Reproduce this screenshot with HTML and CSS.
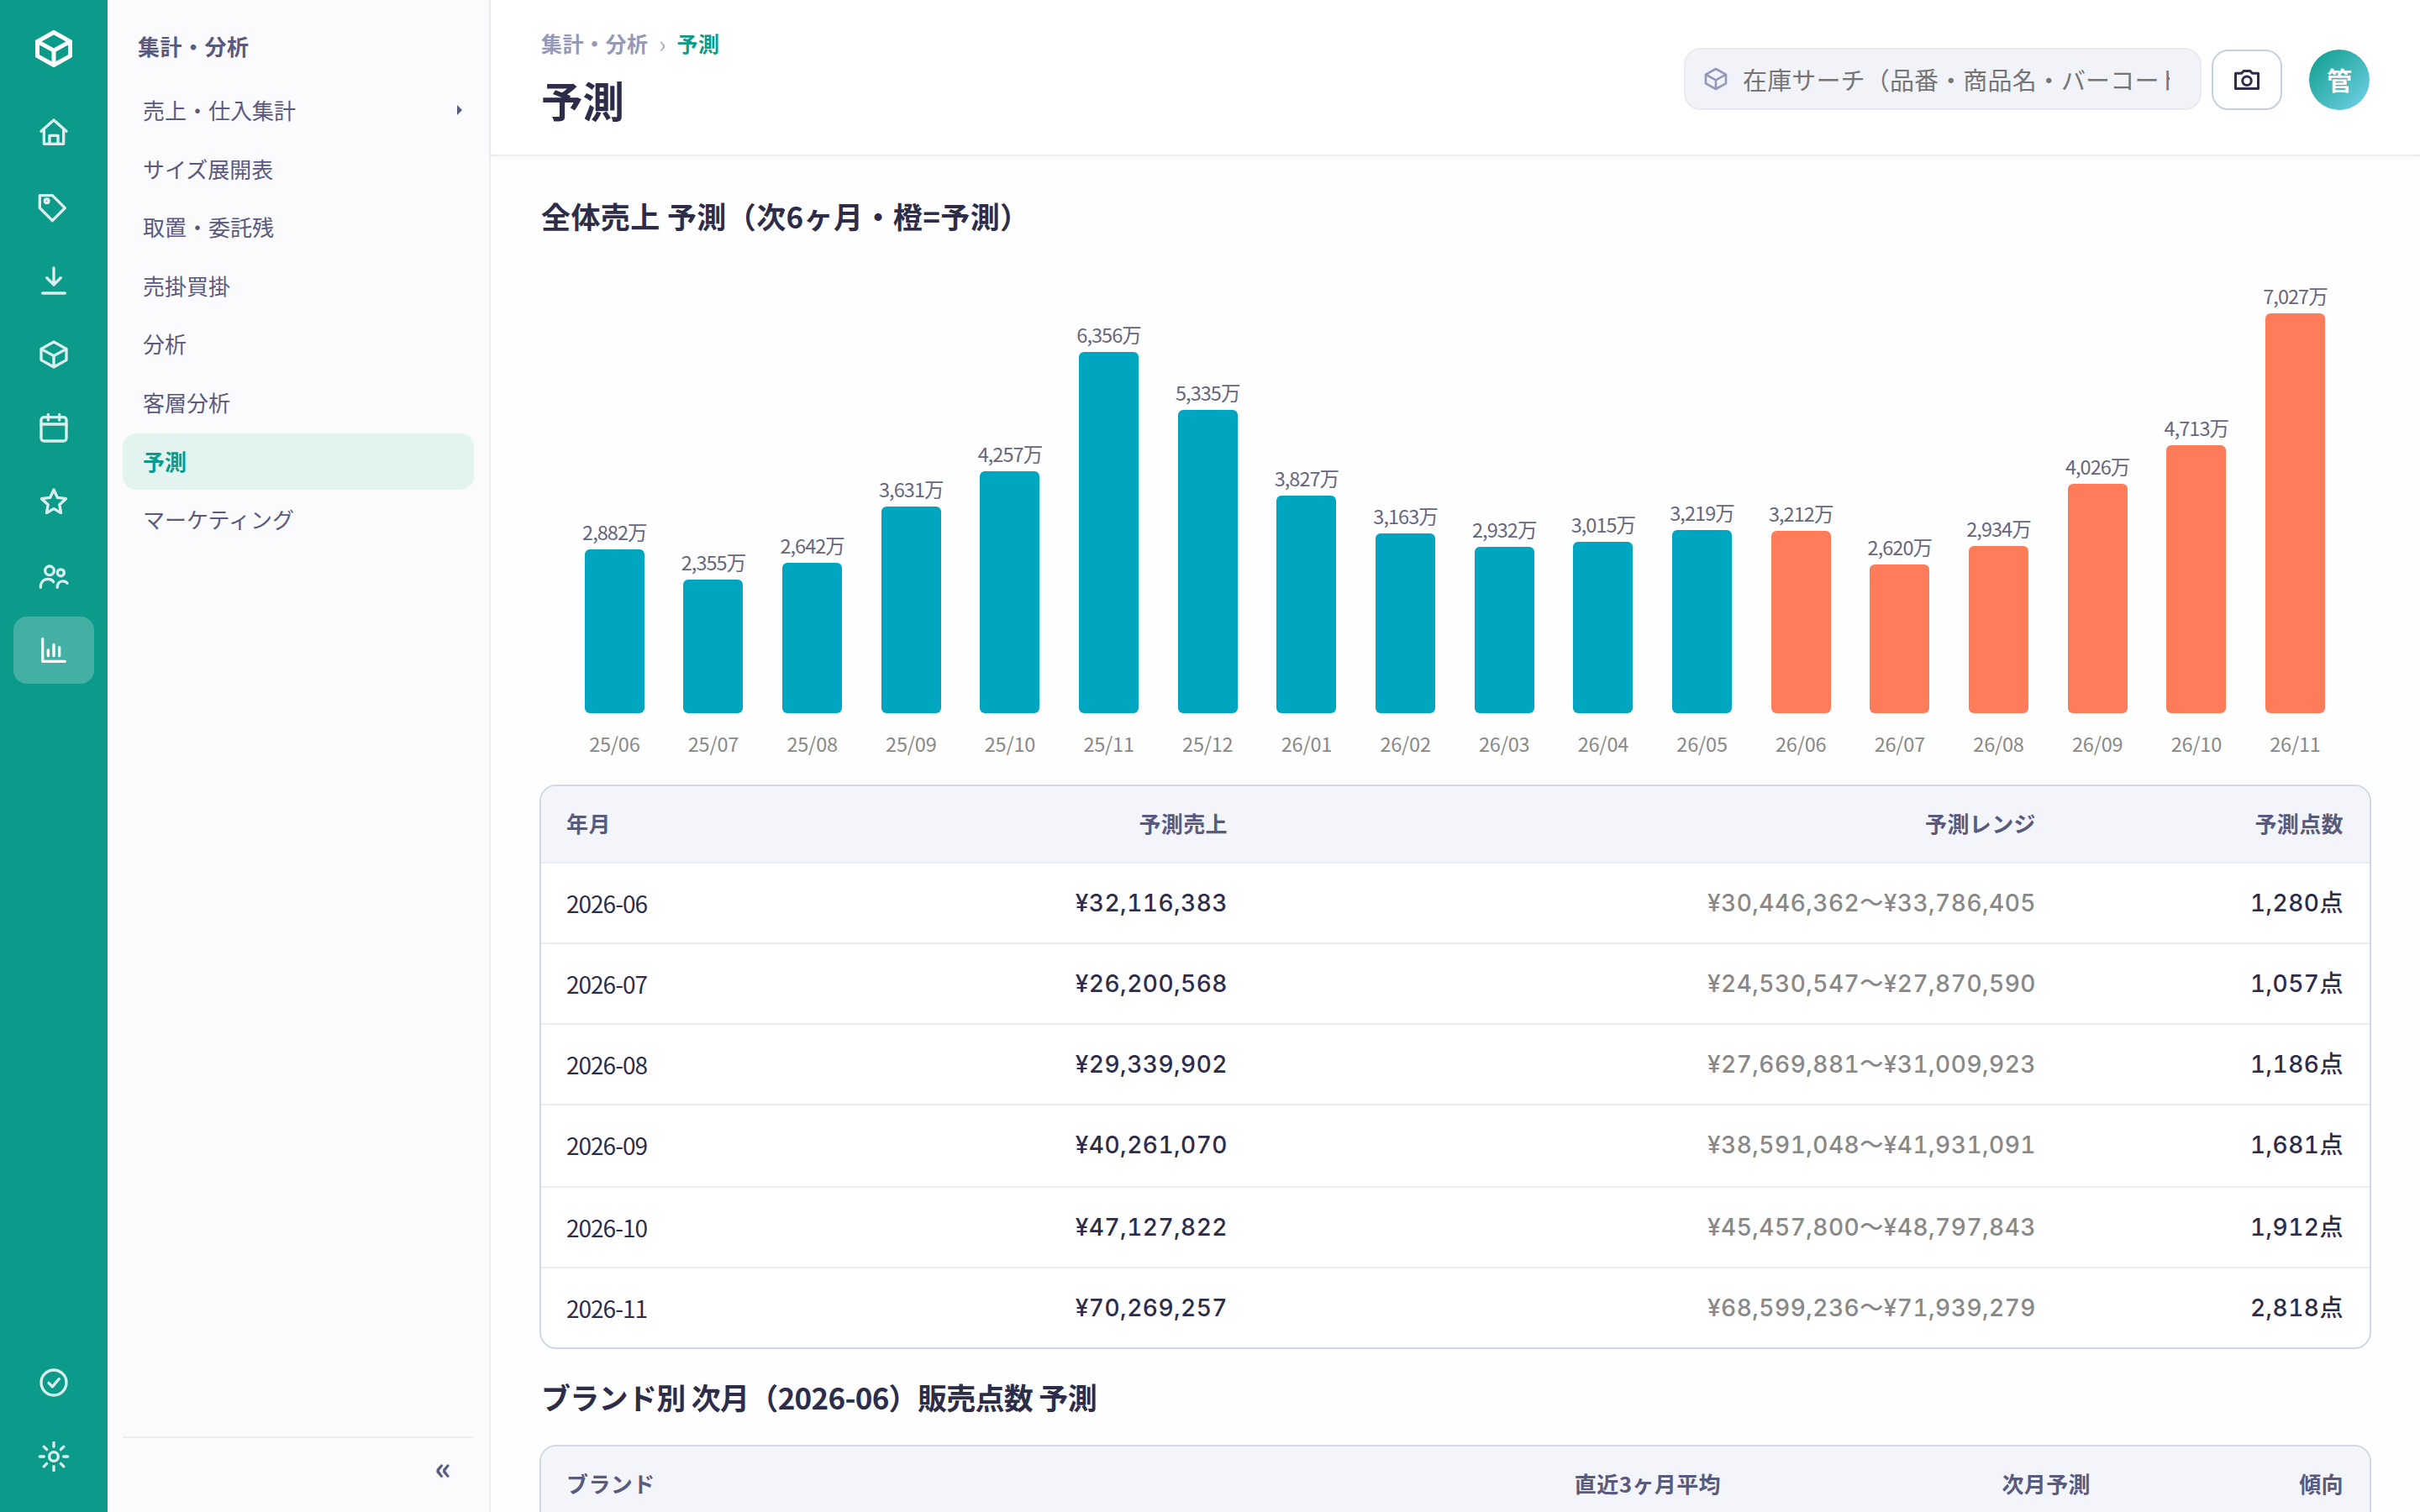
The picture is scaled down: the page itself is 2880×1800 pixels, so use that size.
FILE: index.html
```
<!DOCTYPE html>
<html lang="ja">
<head>
<meta charset="utf-8">
<title>予測</title>
<link rel="stylesheet" href="styles.css">
</head>
<body>
<div class="app">
  <nav class="rail">
    <svg class="logo" viewBox="0 0 24 24"><path d="M12 3l9 5v8l-9 5-9-5V8zM3 8l9 5 9-5M12 13v8"/></svg>
    <a class="rail-item"><svg viewBox="0 0 24 24"><path d="M3 11l9-8 9 8M5 10v10h14V10M9 20v-6h6v6"/></svg></a>
    <a class="rail-item"><svg viewBox="0 0 24 24"><path d="M2 4h9l9 9-9 9-9-9z"/><circle cx="7" cy="8" r="1.4"/></svg></a>
    <a class="rail-item"><svg viewBox="0 0 24 24"><path d="M12 3v12M7 10l5 5 5-5M4 21h16"/></svg></a>
    <a class="rail-item"><svg viewBox="0 0 24 24"><path d="M12 3l9 5v8l-9 5-9-5V8zM3 8l9 5 9-5M12 13v8"/></svg></a>
    <a class="rail-item"><svg viewBox="0 0 24 24"><rect x="3" y="4" width="18" height="17" rx="2"/><path d="M3 9h18M8 2v4M16 2v4"/></svg></a>
    <a class="rail-item"><svg viewBox="0 0 24 24"><path d="M12 3l2.6 5.6 6.1.8-4.6 4.3 1 5.8-5.1-2.9-5.1 2.9 1-5.8-4.6-4.3 6.1-.8z"/></svg></a>
    <a class="rail-item"><svg viewBox="0 0 24 24"><circle cx="9" cy="8" r="3.2"/><circle cx="17" cy="9.5" r="2.4"/><path d="M2.6 20c0-3.6 2.1-6 5.4-6 1.7 0 3 .7 3.8 2M14.5 20c0-2.8 1.6-4.5 4-4.5 1.3 0 2.4.5 3.1 1.5"/></svg></a>
    <a class="rail-item active"><svg viewBox="0 0 24 24"><path d="M4 4v16h16M8 12v4M12 8v8M16 10v6"/></svg></a>
    <span class="grow"></span>
    <a class="rail-item"><svg viewBox="0 0 24 24"><circle cx="12" cy="12" r="9"/><path d="M8.4 12.2l2.6 2.7 4.8-5.6"/></svg></a>
    <a class="rail-item"><svg viewBox="0 0 24 24"><circle cx="12" cy="12" r="3.2"/><path d="M12 2v3M12 19v3M2 12h3M19 12h3M4.9 4.9L7 7M17 17l2.1 2.1M4.9 19.1L7 17M17 7l2.1-2.1"/></svg></a>
  </nav>

  <aside class="panel">
    <h2 class="panel-title">集計・分析</h2>
    <a class="menu-item">売上・仕入集計<svg class="caret" viewBox="0 0 6 12"><path d="M0 0l6 6-6 6z"/></svg></a>
    <a class="menu-item">サイズ展開表</a>
    <a class="menu-item">取置・委託残</a>
    <a class="menu-item">売掛買掛</a>
    <a class="menu-item">分析</a>
    <a class="menu-item">客層分析</a>
    <a class="menu-item current">予測</a>
    <a class="menu-item">マーケティング</a>
    <span class="grow"></span>
    <div class="panel-foot">«</div>
  </aside>

  <main class="main">
    <header class="topbar">
      <div class="heading">
        <div class="crumbs"><span>集計・分析</span><span class="sep">›</span><span class="here">予測</span></div>
        <h1>予測</h1>
      </div>
      <div class="tools">
        <div class="search">
          <svg viewBox="0 0 24 24"><path d="M12 3l9 5v8l-9 5-9-5V8zM3 8l9 5 9-5M12 13v8"/></svg>
          <span class="placeholder">在庫サーチ（品番・商品名・バーコード</span>
        </div>
        <div class="camera"><svg viewBox="0 0 24 24"><path d="M3 6.9h4.6l2-1.95h4.8l2 1.95H21v12.15H3z"/><circle cx="12" cy="12.9" r="3.5"/></svg></div>
        <div class="avatar">管</div>
      </div>
    </header>

    <section class="content">
      <h3 class="first">全体売上 予測（次6ヶ月・橙=予測）</h3>
      <div class="chart">
        <div class="col"><span class="val">2,882万</span><i class="bar" style="height:195.3px"></i><span class="tick">25/06</span></div>
        <div class="col"><span class="val">2,355万</span><i class="bar" style="height:159.4px"></i><span class="tick">25/07</span></div>
        <div class="col"><span class="val">2,642万</span><i class="bar" style="height:179px"></i><span class="tick">25/08</span></div>
        <div class="col"><span class="val">3,631万</span><i class="bar" style="height:245.9px"></i><span class="tick">25/09</span></div>
        <div class="col"><span class="val">4,257万</span><i class="bar" style="height:288.2px"></i><span class="tick">25/10</span></div>
        <div class="col"><span class="val">6,356万</span><i class="bar" style="height:430.3px"></i><span class="tick">25/11</span></div>
        <div class="col"><span class="val">5,335万</span><i class="bar" style="height:361.2px"></i><span class="tick">25/12</span></div>
        <div class="col"><span class="val">3,827万</span><i class="bar" style="height:259.1px"></i><span class="tick">26/01</span></div>
        <div class="col"><span class="val">3,163万</span><i class="bar" style="height:214.2px"></i><span class="tick">26/02</span></div>
        <div class="col"><span class="val">2,932万</span><i class="bar" style="height:198.5px"></i><span class="tick">26/03</span></div>
        <div class="col"><span class="val">3,015万</span><i class="bar" style="height:204.2px"></i><span class="tick">26/04</span></div>
        <div class="col"><span class="val">3,219万</span><i class="bar" style="height:218px"></i><span class="tick">26/05</span></div>
        <div class="col forecast"><span class="val">3,212万</span><i class="bar" style="height:217.5px"></i><span class="tick">26/06</span></div>
        <div class="col forecast"><span class="val">2,620万</span><i class="bar" style="height:177.4px"></i><span class="tick">26/07</span></div>
        <div class="col forecast"><span class="val">2,934万</span><i class="bar" style="height:198.6px"></i><span class="tick">26/08</span></div>
        <div class="col forecast"><span class="val">4,026万</span><i class="bar" style="height:272.6px"></i><span class="tick">26/09</span></div>
        <div class="col forecast"><span class="val">4,713万</span><i class="bar" style="height:319.1px"></i><span class="tick">26/10</span></div>
        <div class="col forecast"><span class="val">7,027万</span><i class="bar" style="height:475.7px"></i><span class="tick">26/11</span></div>
      </div>

      <div class="table monthly">
        <div class="row head"><span>年月</span><span>予測売上</span><span>予測レンジ</span><span>予測点数</span></div>
        <div class="row"><span>2026-06</span><span>¥32,116,383</span><span class="range">¥30,446,362〜¥33,786,405</span><span>1,280点</span></div>
        <div class="row"><span>2026-07</span><span>¥26,200,568</span><span class="range">¥24,530,547〜¥27,870,590</span><span>1,057点</span></div>
        <div class="row"><span>2026-08</span><span>¥29,339,902</span><span class="range">¥27,669,881〜¥31,009,923</span><span>1,186点</span></div>
        <div class="row tall"><span>2026-09</span><span>¥40,261,070</span><span class="range">¥38,591,048〜¥41,931,091</span><span>1,681点</span></div>
        <div class="row"><span>2026-10</span><span>¥47,127,822</span><span class="range">¥45,457,800〜¥48,797,843</span><span>1,912点</span></div>
        <div class="row"><span>2026-11</span><span>¥70,269,257</span><span class="range">¥68,599,236〜¥71,939,279</span><span>2,818点</span></div>
      </div>

      <h3 class="second">ブランド別 次月（2026-06）販売点数 予測</h3>
      <div class="table brands">
        <div class="row head"><span>ブランド</span><span>直近3ヶ月平均</span><span>次月予測</span><span>傾向</span></div>
        <div class="row"></div>
      </div>
    </section>
  </main>
</div>
</body>
</html>
```
FILE: styles.css
```
* { box-sizing: border-box; }

body {
  margin: 0;
  font-family: "Noto Sans CJK JP", sans-serif;
  font-size: 26px;
  color: #2d2d4a;
  background: #fefefe;
}

h1, h2, h3 { margin: 0; }

.app {
  display: flex;
  width: 2880px;
  height: 1800px;
  overflow: hidden;
}

.grow { flex: 1; }

svg {
  fill: none;
  stroke: currentColor;
  stroke-width: 2;
  stroke-linecap: round;
  stroke-linejoin: round;
}

/* icon rail */
.rail {
  flex: none;
  width: 128px;
  display: flex;
  flex-direction: column;
  align-items: center;
  gap: 8px;
  padding: 32px 16px 26px;
  background: #0c9b8a;
  color: #dbf0ee;
}
.logo { width: 52px; height: 52px; margin-bottom: 26px; stroke-width: 2.3; color: #fff; }
.rail-item {
  width: 96px;
  height: 80px;
  flex: none;
  display: flex;
  align-items: center;
  justify-content: center;
  border-radius: 16px;
}
.rail-item svg { width: 40px; height: 40px; }
.rail-item.active { background: #43b0a3; color: #fff; }
.rail .grow { margin-bottom: -8px; }

/* section menu */
.panel {
  flex: none;
  width: 456px;
  display: flex;
  flex-direction: column;
  gap: 2px;
  padding: 35px 18px 0;
  background: #fbfbfe;
  border-right: 2px solid #ecedf3;
  color: #5a5a7e;
}
.panel-title {
  height: 40px;
  margin-bottom: 21.2px;
  padding-left: 18px;
  font-size: 26px;
  line-height: 40px;
  font-weight: 700;
  letter-spacing: .5px;
}
.menu-item {
  flex: none;
  height: 67.6px;
  display: flex;
  align-items: center;
  justify-content: space-between;
  padding: 0 14px 2px 24px;
  border-radius: 16px;
  line-height: 40px;
}
.menu-item.current { background: #e3f4f0; color: #0c9b8a; font-weight: 700; }
.caret { width: 6px; height: 12px; fill: currentColor; stroke: none; }
.panel-foot {
  height: 90px;
  padding: 14px 27px 0 0;
  border-top: 2px solid #eeeff3;
  text-align: right;
  font-size: 37px;
  line-height: 40px;
  font-weight: 700;
}

/* top bar */
.main { flex: 1; min-width: 0; display: flex; flex-direction: column; }
.topbar {
  flex: none;
  height: 186px;
  display: flex;
  align-items: center;
  padding: 0 60px;
  background: #fff;
  border-bottom: 2px solid #ecedf3;
  box-shadow: 0 2px 8px rgba(45, 45, 74, .04);
}
.heading { flex: 1; }
.crumbs {
  display: flex;
  align-items: center;
  gap: 12.5px;
  height: 40px;
  margin-top: 1px;
  font-size: 25px;
  line-height: 40px;
  font-weight: 700;
  letter-spacing: .5px;
  color: #9698ba;
}
.crumbs .sep { font-weight: 400; font-size: 28px; color: #a9aac5; }
.crumbs .here { color: #0c9b8a; }
h1 { margin-top: 12px; font-size: 49.5px; line-height: 72px; font-weight: 700; }
.tools { display: flex; align-items: center; padding-top: 6px; }
.search {
  width: 616px;
  height: 74px;
  display: flex;
  align-items: center;
  gap: 16px;
  margin-top: -2px;
  padding: 0 36px 0 20px;
  background: #f2f3f8;
  border: 2px solid #e9ebf2;
  border-radius: 20px;
  color: #9698ba;
}
.search svg { flex: none; width: 32px; height: 32px; }
.placeholder {
  flex: 1;
  overflow: hidden;
  white-space: nowrap;
  font-size: 29px;
  line-height: 44px;
  letter-spacing: .15px;
  color: #757575;
}
.camera {
  width: 84px;
  height: 72px;
  margin: 0 32px 0 12px;
  display: flex;
  align-items: center;
  justify-content: center;
  background: #fff;
  border: 2px solid #c7d0df;
  border-radius: 20px;
}
.camera svg { width: 36px; height: 36px; }
.avatar {
  width: 72px;
  height: 72px;
  border-radius: 50%;
  background: linear-gradient(135deg, #0c9b8a, #74d3ea);
  color: #fff;
  font-size: 30px;
  line-height: 70px;
  font-weight: 700;
  text-align: center;
}

/* content */
.content { padding: 45px 58px 0; }
h3 { font-size: 35px; line-height: 52px; font-weight: 700; white-space: nowrap; }
.first { height: 52px; margin-left: 2px; letter-spacing: .4px; }
.second { height: 52px; margin: 31px 0 31px 2px; letter-spacing: -.7px; }

.chart {
  display: flex;
  align-items: flex-end;
  height: 651px;
  padding: 0 31.8px 33px 30.5px;
}
.col {
  flex: 1;
  display: flex;
  flex-direction: column;
  align-items: center;
  white-space: nowrap;
}
.val { font-size: 23.5px; line-height: 34px; margin-bottom: 4px; letter-spacing: -.95px; color: #66667e; }
.bar { width: 71px; border-radius: 6px; background: #00a5c0; }
.tick { margin-top: 20px; font-size: 23.5px; line-height: 32px; letter-spacing: -.2px; color: #888; }
.forecast .bar { background: #ff7c5b; }

.table {
  border: 2px solid #d0d8e3;
  border-radius: 20px;
  overflow: hidden;
  background: #fff;
}
.row {
  display: grid;
  height: 96px;
  border-bottom: 2px solid #e8edf2;
}
.row.tall { height: 98px; }
.row:last-child { height: 94px; border-bottom: 0; }
.monthly .row { grid-template-columns: 400px 446px 962px 1fr; }
.brands .row { grid-template-columns: 800px 633px 440px 1fr; }
.row span {
  padding: 0 29px;
  text-align: right;
  font-family: Inter, "Noto Sans CJK JP", sans-serif;
  font-size: 28px;
  line-height: 95px;
  font-weight: 500;
  font-variant-numeric: tabular-nums;
  letter-spacing: .5px;
  white-space: nowrap;
}
.row span:last-child { padding-right: 31px; }
.row span:first-child {
  padding-left: 30px;
  text-align: left;
  font-family: "Noto Sans CJK JP", sans-serif;
  font-weight: 400;
  letter-spacing: -1px;
}
.row .range { color: #888; }
.row.head { height: 92px; background: #f4f5fb; }
.row.head span,
.row.head span:first-child {
  font-family: "Noto Sans CJK JP", sans-serif;
  font-size: 26px;
  line-height: 87px;
  font-weight: 700;
  letter-spacing: .4px;
  color: #5a5a7e;
}
```
